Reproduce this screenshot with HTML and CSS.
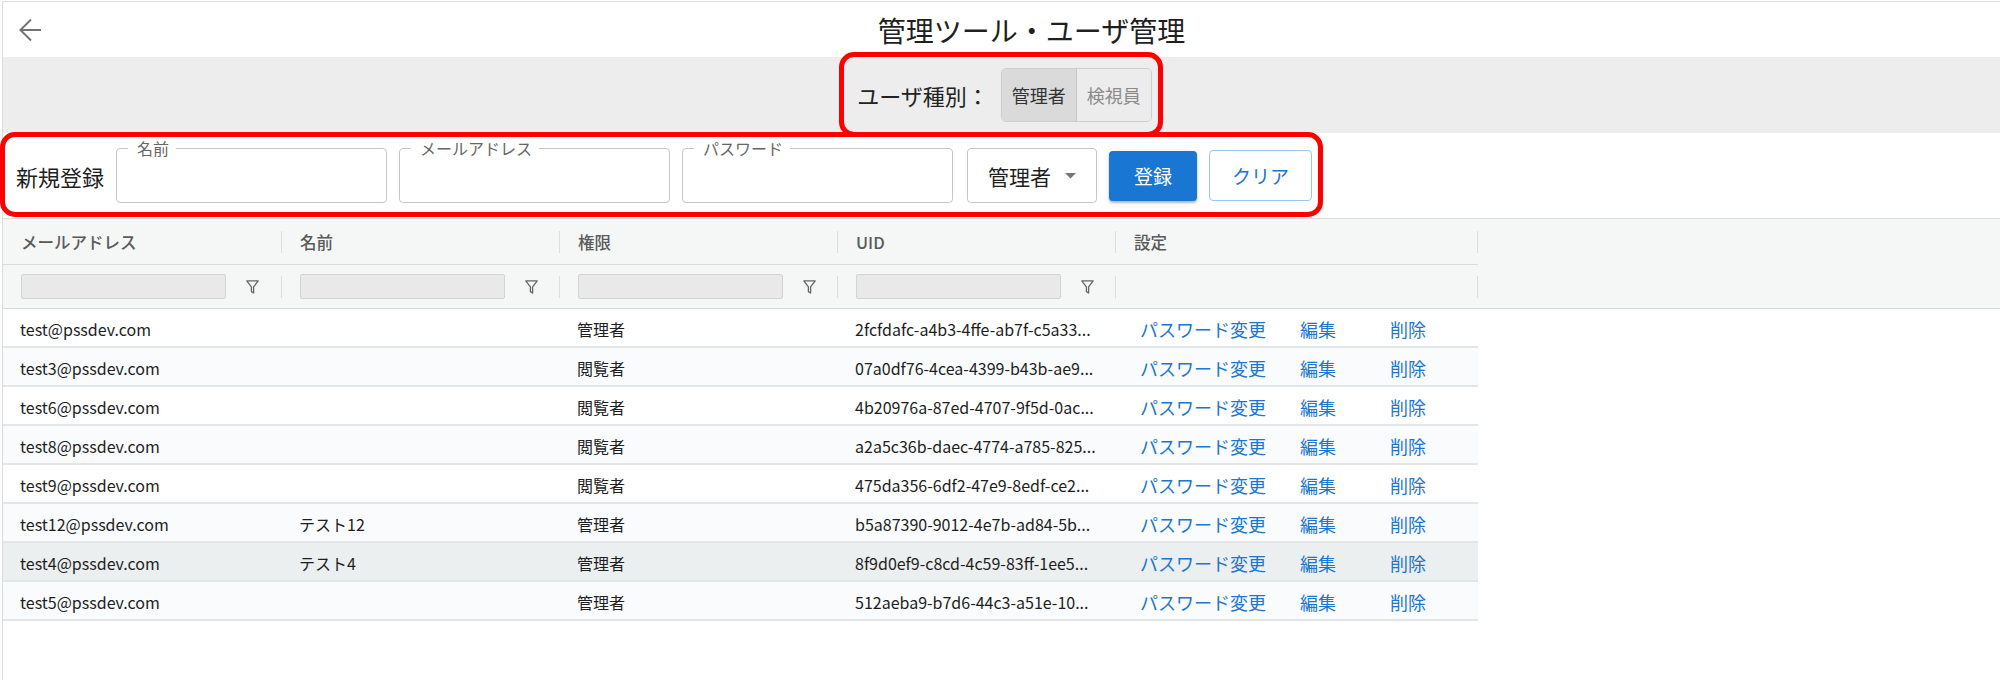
FILE: index.html
```html
<!DOCTYPE html>
<html lang="ja">
<head>
<meta charset="utf-8">
<title>管理ツール・ユーザ管理</title>
<link rel="stylesheet" href="styles.css">
</head>
<body>
<div class="page">
  <header class="header">
    <button class="back" aria-label="戻る">
      <svg width="22" height="22" viewBox="0 0 22 22"><path d="M1.2 11H22M12 0.6L1.4 11L12 21.4" fill="none" stroke="#737373" stroke-width="2"/></svg>
    </button>
    <h1 class="title">管理ツール・ユーザ管理</h1>
  </header>

  <section class="band">
    <span class="band-label">ユーザ種別：</span>
    <div class="toggle">
      <span class="tg tg-on">管理者</span>
      <span class="tg tg-off">検視員</span>
    </div>
  </section>

  <section class="form-row">
    <span class="form-title">新規登録</span>
    <div class="tf"><span class="tf-label">名前</span></div>
    <div class="tf"><span class="tf-label">メールアドレス</span></div>
    <div class="tf"><span class="tf-label">パスワード</span></div>
    <div class="select">
      <span>管理者</span>
      <svg width="11" height="6" viewBox="0 0 11 6"><polygon points="0,0 11,0 5.5,5.5" fill="#757575"/></svg>
    </div>
    <button class="btn btn-primary">登録</button>
    <button class="btn btn-outline">クリア</button>
  </section>

  <section class="grid">
    <div class="grid-head">
      <div class="hrow">
        <div class="hcell"><span>メールアドレス</span><i class="sep"></i></div>
        <div class="hcell"><span>名前</span><i class="sep"></i></div>
        <div class="hcell"><span>権限</span><i class="sep"></i></div>
        <div class="hcell"><span>UID</span><i class="sep"></i></div>
        <div class="hcell"><span>設定</span><i class="sep"></i></div>
      </div>
      <div class="frow">
        <div class="fcell"><span class="finput"></span><svg class="ficon" width="13" height="14" viewBox="0 0 13 14"><path d="M0.8 0.9H12.2L7.6 6.9V13L5.4 11.6V6.9Z" fill="none" stroke="#666666" stroke-width="1.3" stroke-linejoin="round"/></svg><i class="sep"></i></div>
        <div class="fcell"><span class="finput"></span><svg class="ficon" width="13" height="14" viewBox="0 0 13 14"><path d="M0.8 0.9H12.2L7.6 6.9V13L5.4 11.6V6.9Z" fill="none" stroke="#666666" stroke-width="1.3" stroke-linejoin="round"/></svg><i class="sep"></i></div>
        <div class="fcell"><span class="finput"></span><svg class="ficon" width="13" height="14" viewBox="0 0 13 14"><path d="M0.8 0.9H12.2L7.6 6.9V13L5.4 11.6V6.9Z" fill="none" stroke="#666666" stroke-width="1.3" stroke-linejoin="round"/></svg><i class="sep"></i></div>
        <div class="fcell"><span class="finput"></span><svg class="ficon" width="13" height="14" viewBox="0 0 13 14"><path d="M0.8 0.9H12.2L7.6 6.9V13L5.4 11.6V6.9Z" fill="none" stroke="#666666" stroke-width="1.3" stroke-linejoin="round"/></svg><i class="sep"></i></div>
        <div class="fcell"><i class="sep"></i></div>
      </div>
    </div>

    <div class="grid-body">
      <div class="row">
        <div class="cell">test@pssdev.com</div><div class="cell"></div><div class="cell">管理者</div><div class="cell">2fcfdafc-a4b3-4ffe-ab7f-c5a33...</div>
        <div class="cell acts"><a class="lnk lnk-pw">パスワード変更</a><a class="lnk lnk-ed">編集</a><a class="lnk">削除</a></div>
      </div>
      <div class="row">
        <div class="cell">test3@pssdev.com</div><div class="cell"></div><div class="cell">閲覧者</div><div class="cell">07a0df76-4cea-4399-b43b-ae9...</div>
        <div class="cell acts"><a class="lnk lnk-pw">パスワード変更</a><a class="lnk lnk-ed">編集</a><a class="lnk">削除</a></div>
      </div>
      <div class="row">
        <div class="cell">test6@pssdev.com</div><div class="cell"></div><div class="cell">閲覧者</div><div class="cell">4b20976a-87ed-4707-9f5d-0ac...</div>
        <div class="cell acts"><a class="lnk lnk-pw">パスワード変更</a><a class="lnk lnk-ed">編集</a><a class="lnk">削除</a></div>
      </div>
      <div class="row">
        <div class="cell">test8@pssdev.com</div><div class="cell"></div><div class="cell">閲覧者</div><div class="cell">a2a5c36b-daec-4774-a785-825...</div>
        <div class="cell acts"><a class="lnk lnk-pw">パスワード変更</a><a class="lnk lnk-ed">編集</a><a class="lnk">削除</a></div>
      </div>
      <div class="row">
        <div class="cell">test9@pssdev.com</div><div class="cell"></div><div class="cell">閲覧者</div><div class="cell">475da356-6df2-47e9-8edf-ce2...</div>
        <div class="cell acts"><a class="lnk lnk-pw">パスワード変更</a><a class="lnk lnk-ed">編集</a><a class="lnk">削除</a></div>
      </div>
      <div class="row">
        <div class="cell">test12@pssdev.com</div><div class="cell">テスト12</div><div class="cell">管理者</div><div class="cell">b5a87390-9012-4e7b-ad84-5b...</div>
        <div class="cell acts"><a class="lnk lnk-pw">パスワード変更</a><a class="lnk lnk-ed">編集</a><a class="lnk">削除</a></div>
      </div>
      <div class="row row-hover">
        <div class="cell">test4@pssdev.com</div><div class="cell">テスト4</div><div class="cell">管理者</div><div class="cell">8f9d0ef9-c8cd-4c59-83ff-1ee5...</div>
        <div class="cell acts"><a class="lnk lnk-pw">パスワード変更</a><a class="lnk lnk-ed">編集</a><a class="lnk">削除</a></div>
      </div>
      <div class="row">
        <div class="cell">test5@pssdev.com</div><div class="cell"></div><div class="cell">管理者</div><div class="cell">512aeba9-b7d6-44c3-a51e-10...</div>
        <div class="cell acts"><a class="lnk lnk-pw">パスワード変更</a><a class="lnk lnk-ed">編集</a><a class="lnk">削除</a></div>
      </div>
    </div>
  </section>
</div>

<div class="anno anno-a"></div>
<div class="anno anno-b"></div>
</body>
</html>
```

FILE: styles.css
```css
* { box-sizing: border-box; }

html, body {
  margin: 0;
  padding: 0;
  background: #ffffff;
}

body {
  position: relative;
  width: 2000px;
  height: 680px;
  overflow: hidden;
  font-family: "Noto Sans CJK JP", "Noto Sans", sans-serif;
  color: #222222;
}

.page {
  margin: 1px 0 0 2px;
  border-top: 1px solid #dedede;
  border-left: 1px solid #dddddd;
  min-height: 679px;
}

/* header */
.header {
  display: flex;
  align-items: center;
  height: 55px;
}

.back {
  display: flex;
  align-items: center;
  padding: 0 22px 0 16px;
  height: 55px;
  border: 0;
  background: transparent;
}

.title {
  flex: 1;
  margin: 0;
  text-align: center;
  font-size: 28px;
  font-weight: 400;
  line-height: 34px;
  color: #1f1f1f;
}

/* user type band */
.band {
  display: flex;
  justify-content: center;
  align-items: center;
  gap: 12px;
  height: 76px;
  padding-left: 6px;
  background: #ededed;
}

.band-label {
  font-size: 22px;
  line-height: 30px;
  color: #222222;
}

.toggle {
  display: flex;
  height: 54px;
  border: 1px solid #cdcdcd;
  border-radius: 5px;
  overflow: hidden;
}

.tg {
  display: flex;
  align-items: center;
  padding: 0 10px;
  font-size: 18px;
}

.tg-on {
  background: #dadada;
  color: #333333;
  border-right: 1px solid #c6c6c6;
}

.tg-off {
  background: #ececec;
  color: #8a8a8a;
}

/* registration row */
.form-row {
  display: flex;
  align-items: center;
  gap: 12px;
  height: 85px;
  padding-left: 13px;
}

.form-title {
  font-size: 22px;
  line-height: 30px;
  color: #1f1f1f;
}

.tf {
  position: relative;
  width: 271px;
  height: 55px;
  border: 1px solid #c6c6c6;
  border-radius: 4px;
}

.tf-label {
  position: absolute;
  top: -10px;
  left: 11px;
  padding: 0 7px 0 9px;
  background: #ffffff;
  font-size: 16px;
  line-height: 18px;
  color: #666666;
}

.select {
  display: flex;
  align-items: center;
  justify-content: space-between;
  width: 130px;
  height: 55px;
  margin-left: 2px;
  padding: 0 20px;
  border: 1px solid #c6c6c6;
  border-radius: 4px;
  font-size: 21px;
  color: #1f1f1f;
}

.btn {
  font-family: inherit;
  font-size: 19px;
  border-radius: 4px;
  cursor: pointer;
}

.btn-primary {
  height: 50px;
  padding: 0 25px;
  border: 0;
  background: #1976d2;
  color: #ffffff;
  box-shadow: 0 2px 2px rgba(0, 0, 0, 0.22), 0 1px 5px rgba(0, 0, 0, 0.12);
}

.btn-outline {
  height: 51px;
  padding: 0 22px;
  border: 1px solid #9cc6ee;
  background: #ffffff;
  color: #1976d2;
}

/* grid */
.grid-head {
  background: #f5f6f6;
  border-top: 1px solid #d9dbdc;
  border-bottom: 1px solid #d6d9da;
}

.hrow,
.frow,
.row {
  display: grid;
  grid-template-columns: 279px 278px 278px 278px 362px;
  width: 1475px;
}

.hrow {
  height: 46px;
  border-bottom: 1px solid #d9dcdd;
}

.frow {
  height: 43px;
}

.hcell,
.fcell {
  display: flex;
  align-items: center;
  padding-left: 18px;
}

.hcell {
  font-size: 16.5px;
  font-weight: 500;
  color: #5a5a5a;
}

.sep {
  margin-left: auto;
  width: 1px;
  height: 22px;
  background: #dcdfe0;
}

.finput {
  width: 205px;
  height: 25px;
  background: #e9e9e9;
  border: 1px solid #d3d3d3;
  border-radius: 2px;
}

.ficon {
  margin-left: 20px;
}

.row {
  height: 39px;
  border-bottom: 2px solid #e3e5e7;
  background: #ffffff;
}

.row:nth-child(even) {
  background: #f9fbfc;
}

.row.row-hover {
  background: #eceff0;
}

.cell {
  padding: 4px 17px 0;
  font-size: 16px;
  line-height: 33px;
  color: #1e1e1e;
  white-space: nowrap;
  overflow: hidden;
  text-overflow: ellipsis;
}

.acts {
  display: flex;
  padding-left: 24px;
  overflow: visible;
}

.lnk {
  font-size: 18px;
  color: #1976d2;
  cursor: pointer;
}

.lnk-pw {
  width: 160px;
}

.lnk-ed {
  width: 90px;
}

/* annotation frames */
.anno {
  position: absolute;
  border: 5px solid #ff0000;
  border-radius: 15px;
  pointer-events: none;
}

.anno-a {
  left: 839px;
  top: 52px;
  width: 324px;
  height: 85px;
}

.anno-b {
  left: 0;
  top: 132px;
  width: 1323px;
  height: 85px;
}
```
